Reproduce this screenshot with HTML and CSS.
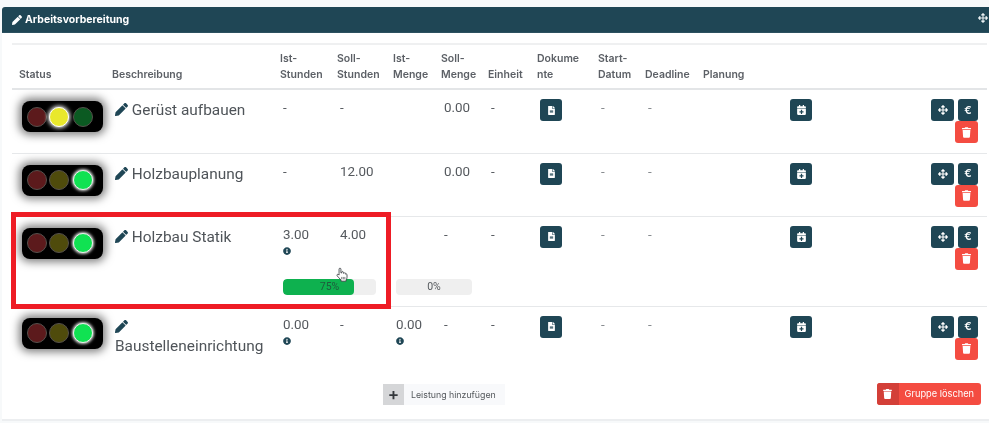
FILE: index.html
```html
<!DOCTYPE html>
<html lang="de">
<head>
<meta charset="utf-8">
<title>Arbeitsvorbereitung</title>
<link rel="stylesheet" href="styles.css">
</head>
<body>
<svg class="defs" aria-hidden="true">
  <symbol id="i-pencil" viewBox="0 0 512 512"><path d="M497.9 142.1l-46.1 46.1c-4.7 4.7-12.3 4.7-17 0l-111-111c-4.7-4.7-4.7-12.3 0-17l46.1-46.1c18.7-18.7 49.1-18.7 67.9 0l60.1 60.1c18.8 18.7 18.8 49.1 0 67.9zM284.2 99.8L21.6 362.4.4 483.9c-2.9 16.4 11.4 30.6 27.8 27.8l121.5-21.3 262.6-262.6c4.7-4.7 4.7-12.3 0-17l-111-111c-4.8-4.7-12.4-4.7-17.1 0z"/></symbol>
  <symbol id="i-move" viewBox="0 0 512 512"><path d="M352.201 425.775l-79.196 79.196c-9.373 9.373-24.568 9.373-33.941 0l-79.196-79.196c-15.119-15.119-4.411-40.971 16.971-40.97h51.162L228 284H127.196v51.162c0 21.382-25.851 32.09-40.971 16.971L7.029 272.937c-9.373-9.373-9.373-24.569 0-33.941L86.225 159.8c15.119-15.119 40.971-4.411 40.971 16.971V228H228V127.196h-51.23c-21.382 0-32.09-25.851-16.971-40.971l79.196-79.196c9.373-9.373 24.568-9.373 33.941 0l79.196 79.196c15.119 15.119 4.411 40.971-16.971 40.971h-51.162V228h100.804v-51.162c0-21.382 25.851-32.09 40.97-16.971l79.196 79.196c9.373 9.373 9.373 24.569 0 33.941L425.773 352.2c-15.119 15.119-40.971 4.411-40.97-16.971V284H284v100.804h51.23c21.382 0 32.09 25.851 16.971 40.971z"/></symbol>
  <symbol id="i-trash" viewBox="0 0 448 512"><path d="M432 32H312l-9.4-18.7A24 24 0 0 0 281.1 0H166.8a23.72 23.72 0 0 0-21.4 13.3L136 32H16A16 16 0 0 0 0 48v32a16 16 0 0 0 16 16h416a16 16 0 0 0 16-16V48a16 16 0 0 0-16-16zM53.2 467a48 48 0 0 0 47.9 45h245.8a48 48 0 0 0 47.9-45L416 128H32z"/></symbol>
  <symbol id="i-file" viewBox="0 0 384 512"><path d="M224 136V0H24C10.7 0 0 10.7 0 24v464c0 13.3 10.7 24 24 24h336c13.3 0 24-10.7 24-24V160H248c-13.2 0-24-10.8-24-24zm64 236c0 6.6-5.4 12-12 12H108c-6.6 0-12-5.4-12-12v-8c0-6.6 5.4-12 12-12h168c6.6 0 12 5.4 12 12v8zm0-64c0 6.6-5.4 12-12 12H108c-6.6 0-12-5.4-12-12v-8c0-6.6 5.4-12 12-12h168c6.6 0 12 5.4 12 12v8zm0-72v8c0 6.6-5.4 12-12 12H108c-6.6 0-12-5.4-12-12v-8c0-6.6 5.4-12 12-12h168c6.6 0 12 5.4 12 12zm96-114.1v6.1H256V0h6.1c6.4 0 12.5 2.5 17 7l97.9 98c4.5 4.5 7 10.6 7 16.9z"/></symbol>
  <symbol id="i-cal" viewBox="0 0 448 512"><path d="M436 160H12c-6.6 0-12-5.4-12-12v-36c0-26.5 21.5-48 48-48h48V12c0-6.6 5.4-12 12-12h40c6.6 0 12 5.4 12 12v52h128V12c0-6.6 5.4-12 12-12h40c6.6 0 12 5.4 12 12v52h48c26.5 0 48 21.5 48 48v36c0 6.6-5.4 12-12 12zM12 192h424c6.6 0 12 5.4 12 12v260c0 26.5-21.5 48-48 48H48c-26.5 0-48-21.5-48-48V204c0-6.6 5.4-12 12-12zm316 140c0-6.6-5.4-12-12-12h-60v-60c0-6.6-5.4-12-12-12h-40c-6.6 0-12 5.4-12 12v60h-60c-6.6 0-12 5.4-12 12v40c0 6.6 5.4 12 12 12h60v60c0 6.6 5.4 12 12 12h40c6.6 0 12-5.4 12-12v-60h60c6.6 0 12-5.4 12-12v-40z"/></symbol>
  <symbol id="i-info" viewBox="0 0 512 512"><path d="M256 8C119.043 8 8 119.083 8 256c0 136.997 111.043 248 248 248s248-111.003 248-248C504 119.083 392.957 8 256 8zm0 110c23.196 0 42 18.804 42 42s-18.804 42-42 42-42-18.804-42-42 18.804-42 42-42zm56 254c0 6.627-5.373 12-12 12h-88c-6.627 0-12-5.373-12-12v-24c0-6.627 5.373-12 12-12h12v-64h-12c-6.627 0-12-5.373-12-12v-24c0-6.627 5.373-12 12-12h64c6.627 0 12 5.373 12 12v100h12c6.627 0 12 5.373 12 12v24z"/></symbol>
</svg>

<section class="card">
  <header class="card-head">
    <span class="card-title"><svg class="ic ic-head"><use href="#i-pencil"/></svg>Arbeitsvorbereitung</span>
    <svg class="ic ic-headmove"><use href="#i-move"/></svg>
  </header>

  <table class="grid">
    <colgroup>
      <col class="c-status"><col class="c-desc"><col class="c-ist"><col class="c-soll"><col class="c-imenge"><col class="c-smenge"><col class="c-einheit"><col class="c-doc"><col class="c-start"><col class="c-dead"><col class="c-plan"><col class="c-cal"><col class="c-act">
    </colgroup>
    <thead>
      <tr>
        <th>Status</th><th>Beschreibung</th><th>Ist-Stunden</th><th>Soll-Stunden</th><th>Ist-Menge</th><th>Soll-Menge</th><th>Einheit</th><th class="th-doc">Dokumente</th><th>Start-Datum</th><th>Deadline</th><th>Planung</th><th></th><th></th>
      </tr>
    </thead>
    <tbody>
      <tr class="row row-1">
        <td><div class="light"><i class="lamp red"></i><i class="lamp yellow on"></i><i class="lamp green"></i></div></td>
        <td class="title"><svg class="ic ic-title"><use href="#i-pencil"/></svg> Gerüst aufbauen</td>
        <td>-</td><td>-</td><td></td><td>0.00</td><td>-</td>
        <td><button class="btn"><svg class="ic ic-file"><use href="#i-file"/></svg></button></td>
        <td class="dim">-</td><td class="dim">-</td><td></td>
        <td><button class="btn"><svg class="ic ic-cal"><use href="#i-cal"/></svg></button></td>
        <td class="actions"><div class="act"><button class="btn btn-move"><svg class="ic ic-move"><use href="#i-move"/></svg></button><button class="btn btn-euro">€</button><button class="btn btn-del"><svg class="ic ic-trash"><use href="#i-trash"/></svg></button></div></td>
      </tr>
      <tr class="row row-2">
        <td><div class="light"><i class="lamp red"></i><i class="lamp yellow"></i><i class="lamp green on"></i></div></td>
        <td class="title"><svg class="ic ic-title"><use href="#i-pencil"/></svg> Holzbauplanung</td>
        <td>-</td><td>12.00</td><td></td><td>0.00</td><td>-</td>
        <td><button class="btn"><svg class="ic ic-file"><use href="#i-file"/></svg></button></td>
        <td class="dim">-</td><td class="dim">-</td><td></td>
        <td><button class="btn"><svg class="ic ic-cal"><use href="#i-cal"/></svg></button></td>
        <td class="actions"><div class="act"><button class="btn btn-move"><svg class="ic ic-move"><use href="#i-move"/></svg></button><button class="btn btn-euro">€</button><button class="btn btn-del"><svg class="ic ic-trash"><use href="#i-trash"/></svg></button></div></td>
      </tr>
      <tr class="row row-3a">
        <td rowspan="2"><div class="light"><i class="lamp red"></i><i class="lamp yellow"></i><i class="lamp green on"></i></div></td>
        <td rowspan="2" class="title"><svg class="ic ic-title"><use href="#i-pencil"/></svg> Holzbau Statik</td>
        <td>3.00<svg class="ic ic-info"><use href="#i-info"/></svg></td><td>4.00</td><td></td><td>-</td>
        <td rowspan="2">-</td>
        <td rowspan="2"><button class="btn"><svg class="ic ic-file"><use href="#i-file"/></svg></button></td>
        <td rowspan="2" class="dim">-</td><td rowspan="2" class="dim">-</td><td rowspan="2"></td>
        <td rowspan="2"><button class="btn"><svg class="ic ic-cal"><use href="#i-cal"/></svg></button></td>
        <td rowspan="2" class="actions"><div class="act"><button class="btn btn-move"><svg class="ic ic-move"><use href="#i-move"/></svg></button><button class="btn btn-euro">€</button><button class="btn btn-del"><svg class="ic ic-trash"><use href="#i-trash"/></svg></button></div></td>
      </tr>
      <tr class="row row-3b">
        <td colspan="2" class="td-bar"><div class="bar bar-a"><div class="fill" style="width:76%"></div><span class="bar-label">75%</span></div></td>
        <td colspan="2" class="td-bar"><div class="bar bar-b"><span class="bar-label">0%</span></div></td>
      </tr>
      <tr class="row row-4">
        <td><div class="light"><i class="lamp red"></i><i class="lamp yellow"></i><i class="lamp green on"></i></div></td>
        <td class="title"><svg class="ic ic-title"><use href="#i-pencil"/></svg> Baustelleneinrichtung</td>
        <td>0.00<svg class="ic ic-info"><use href="#i-info"/></svg></td><td>-</td>
        <td>0.00<svg class="ic ic-info"><use href="#i-info"/></svg></td><td>-</td><td>-</td>
        <td><button class="btn"><svg class="ic ic-file"><use href="#i-file"/></svg></button></td>
        <td class="dim">-</td><td class="dim">-</td><td></td>
        <td><button class="btn"><svg class="ic ic-cal"><use href="#i-cal"/></svg></button></td>
        <td class="actions"><div class="act"><button class="btn btn-move"><svg class="ic ic-move"><use href="#i-move"/></svg></button><button class="btn btn-euro">€</button><button class="btn btn-del"><svg class="ic ic-trash"><use href="#i-trash"/></svg></button></div></td>
      </tr>
    </tbody>
  </table>

  <footer class="card-foot">
    <button class="add"><span class="add-plus">+</span><span class="add-label">Leistung hinzufügen</span></button>
    <button class="drop"><span class="drop-icon"><svg class="ic ic-droptrash"><use href="#i-trash"/></svg></span><span class="drop-label">Gruppe löschen</span></button>
  </footer>

  <div class="highlight"></div>
  <svg class="cursor" viewBox="0 0 16 18"><path d="M5 8V2.4c0-1.6 2.3-1.6 2.3 0V7l1 .1V6.2c0-1.3 2-1.3 2 .2v1l.9.1c.2-1 1.9-.9 1.9.5v.6c.5-.6 1.7-.3 1.7.8v3.1c0 1.6-.7 2.4-1.2 3.3v1.4H7.4v-1.3C6 14 4 12.4 2.7 10.7 1.800 9.400 3.200 8 4.400 9.100L5 9.700Z" fill="#fff" stroke="#33383c" stroke-width="1"/><path d="M8.300 12v3M10.200 12v3M12.100 12v3" stroke="#33383c" stroke-width=".8"/></svg>
</section>
</body>
</html>
```

FILE: styles.css
```css
* { box-sizing: border-box; }
html, body { margin: 0; height: 100%; overflow: hidden; }
body {
  background: #f7f9fa;
  padding: 7px 0 0 2px;
  font-family: Inter, "Liberation Sans", sans-serif;
  color: #53575c;
}
.defs { position: absolute; width: 0; height: 0; }
.ic { display: inline-block; fill: currentColor; }

.card {
  position: relative;
  width: 987px;
  height: 414px;
  background: #fff;
  border-bottom: 2px solid #eceef0;
  filter: blur(.35px);
}
.card-head {
  height: 26px;
  background: #1f4655;
  color: #fff;
  border-radius: 3px 0 0 0;
  border-bottom: 1px solid #2c5160;
  display: flex;
  align-items: center;
  justify-content: space-between;
  padding: 0 1px 0 10px;
  font-size: 10.5px;
  font-weight: 700;
}
.card-title { display: flex; align-items: center; gap: 3px; }
.ic-head { width: 10px; height: 10px; }
.ic-headmove { width: 10px; height: 10px; color: #e9f0f2; margin-bottom: 4px; }

.grid {
  width: 975px;
  margin: 10px 0 0 10px;
  border-collapse: collapse;
  table-layout: fixed;
  border-top: 2px solid #eff0f1;
}
.c-status { width: 93px; }
.c-desc { width: 168px; }
.c-ist { width: 57px; }
.c-soll { width: 56px; }
.c-imenge { width: 48px; }
.c-smenge { width: 47px; }
.c-einheit { width: 49px; }
.c-doc { width: 61px; }
.c-start { width: 47px; }
.c-dead { width: 58px; }
.c-plan { width: 84px; }
.c-cal { width: 150px; }
.c-act { width: 57px; }

th {
  height: 45px;
  padding: 0 2px 6px 7px;
  vertical-align: bottom;
  text-align: left;
  font-size: 10.5px;
  font-weight: 600;
  line-height: 15.5px;
  color: #5c6066;
  border-bottom: 2px solid #e3e5e7;
}
.th-doc { word-break: break-all; padding-right: 9px; }
td {
  padding: 7px 0 0 10px;
  vertical-align: top;
  font-family: Roboto, Inter, sans-serif;
  font-size: 13.4px;
  line-height: 21px;
  color: #55595e;
}
.row-1 > td { height: 64px; }
.row-2 > td, .row-4 > td, .row-3a > td { border-top: 1px solid #e6e8ea; }
.row-2 > td { height: 63px; }
.row-3a > td { height: 57px; }
.row-3b > td { height: 33px; padding: 6px 0 0 10px; }
.row-4 > td { height: 64px; border-top: 1px solid #e6e8ea; }
.dim { color: #85898d; }

.light {
  width: 81px;
  height: 31px;
  margin-top: 4px;
  padding: 0 0 0 5px;
  background: #000;
  border-radius: 8px;
  box-shadow: 0 0 9px 3px rgba(0, 0, 0, .5);
  display: flex;
  align-items: center;
  gap: 2px;
}
.lamp {
  width: 20px;
  height: 20px;
  border-radius: 50%;
  border: 1px solid #55504c;
}
.lamp.green { margin-left: 2px; }
.red { background: #5c1a1c; }
.yellow { background: #4f4b0c; }
.green { background: #0b5a22; }
.yellow.on { background: #e9e82c; border-color: #fff; box-shadow: 0 0 4px 1px #fff; }
.green.on { background: #10e252; border-color: #eee; box-shadow: 0 0 3px 1px #ddd; }

.title {
  font-size: 15.4px;
  line-height: 19px;
  padding-top: 11px;
  color: #4f5459;
}
.ic-title { width: 13px; height: 13px; color: #1f4655; vertical-align: -1px; margin-right: 0; }
.ic-info { display: block; width: 8px; height: 8px; color: #1f4655; margin-top: 2px; }

.btn {
  width: 22px;
  height: 22px;
  margin: 2px 0 0;
  padding: 0;
  border: 0;
  border-radius: 3px;
  background: #1f4655;
  color: #fff;
  display: flex;
  align-items: center;
  justify-content: center;
  font: 600 11px/1 Inter, "Liberation Sans", sans-serif;
}
.ic-file { width: 7px; height: 9px; }
.ic-cal { width: 9px; height: 10px; }
.ic-move { width: 10px; height: 10px; }
.ic-trash { width: 9px; height: 11px; }
.actions { padding-left: 0; }
.act {
  width: 47px;
  margin-left: auto;
  margin-right: 9px;
  display: flex;
  flex-wrap: wrap;
  justify-content: flex-end;
  margin-top: 2px;
  column-gap: 4px;
}
.act .btn { margin: 0; }
.btn-move { width: 23px; }
.btn-euro { width: 20px; }
.btn-del { width: 23px; background: #f44c41; }

.td-bar { vertical-align: top; }
.bar {
  position: relative;
  height: 16px;
  border-radius: 4px;
  background: #efefef;
  text-align: center;
  font-size: 10.5px;
  line-height: 16px;
  overflow: hidden;
  color: #54585c;
}
.bar-a { width: 93px; color: #1f5a3c; }
.bar-b { width: 76px; }
.fill { position: absolute; left: 0; top: 0; bottom: 0; background: #0eb14f; border-radius: 4px; }
.bar-label { position: relative; }

.card-foot {
  display: flex;
  justify-content: space-between;
  align-items: center;
  padding: 13px 8px 0 381px;
}
.add, .drop { display: flex; align-items: stretch; padding: 0; border: 0; font-family: inherit; }
.add { height: 21px; background: #f8f9fb; color: #54585c; }
.add-plus {
  width: 21px;
  background: #d5d6d8;
  font-size: 17px;
  font-weight: 600;
  line-height: 20px;
  color: #33373b;
}
.add-label { padding: 0 9px 0 7px; font-size: 8.8px; line-height: 21px; }
.drop { height: 22px; background: #f44c41; color: #fff; border-radius: 3px; overflow: hidden; }
.drop-icon { width: 22px; background: #d33f38; display: flex; align-items: center; justify-content: center; }
.ic-droptrash { width: 9px; height: 10px; }
.drop-label { padding: 0 7px 0 6px; font-size: 9.25px; line-height: 22px; }

.highlight {
  position: absolute;
  left: 9px;
  top: 205px;
  width: 380px;
  height: 97px;
  border: 5px solid #ee1c25;
  pointer-events: none;
}
.cursor { position: absolute; left: 333px; top: 260px; width: 13px; height: 15px; }
```
